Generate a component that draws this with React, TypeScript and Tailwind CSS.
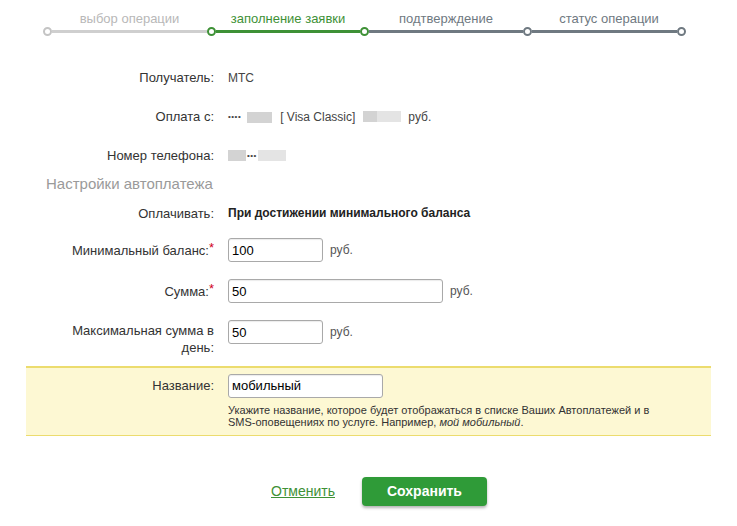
import React, { useState } from "react";

const steps = [
  { label: "выбор операции", width: 164, line: "bg-[#cfcfcf]", dot: "border-[#c4c4c4]", text: "text-[#b8b8b8]" },
  { label: "заполнение заявки", width: 153, line: "bg-[#3e9136]", dot: "border-[#3e9136]", text: "text-[#3e9136]" },
  { label: "подтверждение", width: 163, line: "bg-[#6f7981]", dot: "border-[#3e9136]", text: "text-[#6f7981]" },
  { label: "статус операции", width: 163, line: "bg-[#6f7981]", dot: "border-[#6f7981]", text: "text-[#6f7981]" },
];

const Dot = ({ className }: { className: string }) => (
  <div className={`w-[9px] h-[9px] shrink-0 rounded-full border-2 bg-white ${className}`} />
);

const Stepper = () => (
  <div className="flex pl-[43px] pt-[11px] h-[58px]">
    {steps.map((s, i) => (
      <div key={i} className="flex flex-col" style={{ width: s.width }}>
        <div className={`pl-[9px] text-center text-[13px] leading-[15px] ${s.text}`}>{s.label}</div>
        <div className="flex items-center mt-[1px]">
          <Dot className={s.dot} />
          <div className={`h-[3px] flex-1 ${s.line}`} />
          {i === steps.length - 1 && <Dot className="border-[#6f7981]" />}
        </div>
      </div>
    ))}
  </div>
);

const Blur = ({ w, light }: { w: number; light?: boolean }) => (
  <span
    className={`inline-block h-[11px] align-middle ${light ? "bg-[#e4e4e4]" : "bg-[#d3d3d3]"}`}
    style={{ width: w }}
  />
);

const Label = ({ children, req }: { children: React.ReactNode; req?: boolean }) => (
  <div className="w-[150px] shrink-0 text-right text-[13px] leading-[17px] text-[#333]">
    {children}
    {req && <span className="text-[#d0021b] relative -top-[3px]">*</span>}
  </div>
);

const Field = ({ value, onChange, w }: { value: string; onChange: (v: string) => void; w: string }) => (
  <input
    value={value}
    onChange={(e) => onChange(e.target.value)}
    className={`${w} h-[24px] rounded-[3px] border border-[#a9a9a9] bg-white pl-[3px] text-[13px] text-black outline-none shadow-[inset_0_1px_1px_rgba(0,0,0,0.08)]`}
  />
);

export default function App() {
  const [minBalance, setMinBalance] = useState("100");
  const [sum, setSum] = useState("50");
  const [maxSum, setMaxSum] = useState("50");
  const [name, setName] = useState("мобильный");

  return (
    <div className="w-[737px] h-[526px] bg-white font-['Liberation_Sans',Arial,sans-serif] text-[#333] overflow-hidden">
      <Stepper />

      <div className="mx-[26px] flex flex-col">
        <div className="flex items-center h-[39px] pl-[38px]">
          <Label>Получатель:</Label>
          <div className="pl-[14px] text-[12px] text-[#444]">МТС</div>
        </div>
        <div className="flex items-center h-[39px] pl-[38px]">
          <Label>Оплата с:</Label>
          <div className="pl-[14px] flex items-center text-[12px] text-[#444]">
            <span className="text-[8px] tracking-[0.5px]">••••</span>
            <span className="ml-[6px]"><Blur w={25} /></span>
            <span className="ml-[8px]">[ Visa Classic]</span>
            <span className="ml-[8px] flex">
              <Blur w={14} />
              <Blur w={24} light />
            </span>
            <span className="ml-[7px]">руб.</span>
          </div>
        </div>
        <div className="flex items-center h-[39px] pl-[38px]">
          <Label>Номер телефона:</Label>
          <div className="pl-[14px] flex items-center text-[12px] text-[#444]">
            <Blur w={18} />
            <span className="text-[8px] tracking-[0.5px] mx-[1px]">•••</span>
            <Blur w={28} light />
          </div>
        </div>

        <div className="h-[17px] pl-[20px] text-[15px] leading-[17px] text-[#9a9a9a]">Настройки автоплатежа</div>

        <div className="flex items-center h-[42px] pl-[38px]">
          <Label>Оплачивать:</Label>
          <div className="pl-[14px] text-[12px] font-bold text-[#222]">При достижении минимального баланса</div>
        </div>

        <div className="flex items-center h-[32px] pl-[38px]">
          <Label req>Минимальный баланс:</Label>
          <div className="pl-[14px] flex items-center gap-[7px]">
            <Field value={minBalance} onChange={setMinBalance} w="w-[95px]" />
            <span className="text-[12px] text-[#555]">руб.</span>
          </div>
        </div>

        <div className="flex items-center h-[50px] pl-[38px]">
          <Label req>Сумма:</Label>
          <div className="pl-[14px] flex items-center gap-[7px]">
            <Field value={sum} onChange={setSum} w="w-[215px]" />
            <span className="text-[12px] text-[#555]">руб.</span>
          </div>
        </div>

        <div className="flex items-start h-[50px] pl-[38px]">
          <div className="mt-[6px]">
            <Label>Максимальная сумма в день:</Label>
          </div>
          <div className="pl-[14px] mt-[4px] flex items-center gap-[7px]">
            <Field value={maxSum} onChange={setMaxSum} w="w-[95px]" />
            <span className="text-[12px] text-[#555]">руб.</span>
          </div>
        </div>

        <div className="bg-[#fdf8d3] border-t-2 border-b border-[#ecdc6e] pl-[38px] pt-[5px] h-[70px]">
          <div className="flex items-center">
            <Label>Название:</Label>
            <div className="pl-[14px]">
              <Field value={name} onChange={setName} w="w-[155px]" />
            </div>
          </div>
          <div className="pl-[164px] pt-[6px] text-[11px] leading-[12px] text-[#333]">
            Укажите название, которое будет отображаться в списке Ваших Автоплатежей и в
            <br />
            SMS-оповещениях по услуге. Например, <i>мой мобильный</i>.
          </div>
        </div>
      </div>

      <div className="flex items-center mt-[41px] pl-[271px] gap-[27px]">
        <a href="#" className="text-[14px] text-[#3e9136] underline">Отменить</a>
        <button className="w-[125px] h-[29px] rounded-[4px] bg-[#2f9b38] text-white text-[14px] font-bold shadow-[0_2px_3px_rgba(0,0,0,0.3)]">
          Сохранить
        </button>
      </div>
    </div>
  );
}
